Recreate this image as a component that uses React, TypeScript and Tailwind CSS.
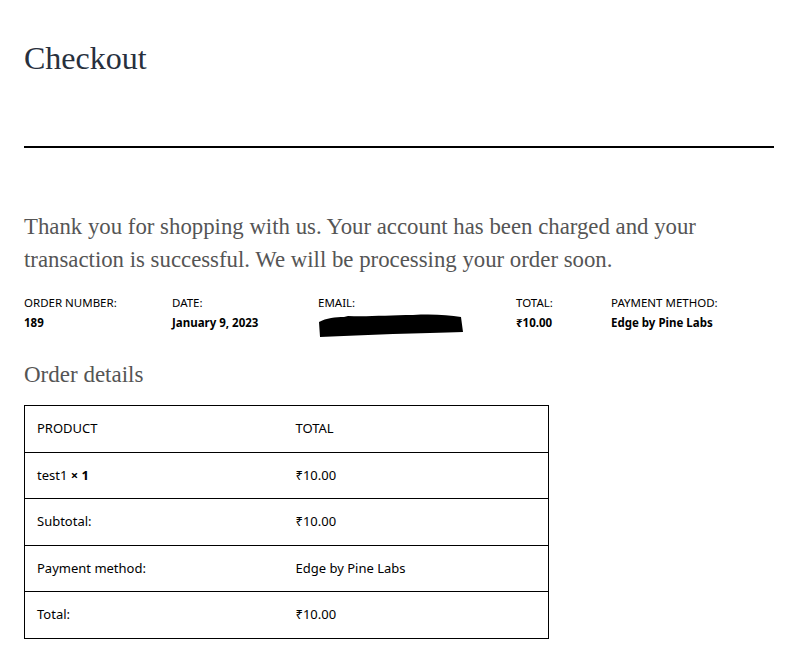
import React from "react"

const serif = "font-['Liberation_Serif',serif]"
const sans = "font-['Noto_Sans',sans-serif]"

const meta = [
  { label: "ORDER NUMBER:", value: "189", w: "w-[148px]" },
  { label: "DATE:", value: "January 9, 2023", w: "w-[146px]" },
  { label: "EMAIL:", value: null, w: "w-[198px]" },
  { label: "TOTAL:", value: "₹10.00", w: "w-[95px]" },
  { label: "PAYMENT METHOD:", value: "Edge by Pine Labs", w: "" },
]

const rows = [
  { left: "Subtotal:", right: "₹10.00", h: "h-[47px]" },
  { left: "Payment method:", right: "Edge by Pine Labs", h: "h-[46px]" },
  { left: "Total:", right: "₹10.00", h: "h-[47px]" },
]

// black marker scribble over the email
const Redacted = () => (
  <svg width="146" height="26" viewBox="0 0 146 26" className="block">
    <path
      d="M1 10 C8 6 18 5 26 5 L30 4 C50 5 70 3 95 3 C115 2 130 3 143 5 L145 20 C125 21 100 21 75 22 C50 23 25 24 2 25 Z"
      fill="#000"
    />
  </svg>
)

export default function App() {
  return (
    <div className={`min-h-screen bg-white px-6 pt-[38px] ${sans}`}>
      <h1 className={`${serif} text-[32px] leading-[40px] text-[#28303d]`}>Checkout</h1>

      <hr className="mt-[68px] w-[750px] border-t-2 border-black" />

      <p className={`${serif} mt-[62px] w-[720px] text-[22.8px] leading-[33px] text-[#555]`}>
        Thank you for shopping with us. Your account has been charged and your transaction is successful.
        We will be processing your order soon.
      </p>

      {/* order meta */}
      <div className="mt-[18px] flex text-[11.5px] text-black">
        {meta.map((m) => (
          <div key={m.label} className={m.w}>
            <div className="leading-[18px]">{m.label}</div>
            {m.value ? (
              <div className="mt-[2px] font-bold leading-[18px]">{m.value}</div>
            ) : (
              <Redacted />
            )}
          </div>
        ))}
      </div>

      <h2 className={`${serif} mt-[22px] text-[23px] leading-[30px] text-[#555]`}>Order details</h2>

      <table className="mt-[15px] w-[525px] border-collapse border border-black text-[13px] text-black">
        <tbody>
          <tr className="h-[47px] border-b border-black">
            <td className="w-[271px] pl-3">PRODUCT</td>
            <td>TOTAL</td>
          </tr>
          <tr className="h-[46px] border-b border-black">
            <td className="pl-3">
              test1 <span className="font-bold">× 1</span>
            </td>
            <td>₹10.00</td>
          </tr>
          {rows.map((r) => (
            <tr key={r.left} className={`${r.h} border-b border-black`}>
              <td className="pl-3">{r.left}</td>
              <td>{r.right}</td>
            </tr>
          ))}
        </tbody>
      </table>
    </div>
  )
}
